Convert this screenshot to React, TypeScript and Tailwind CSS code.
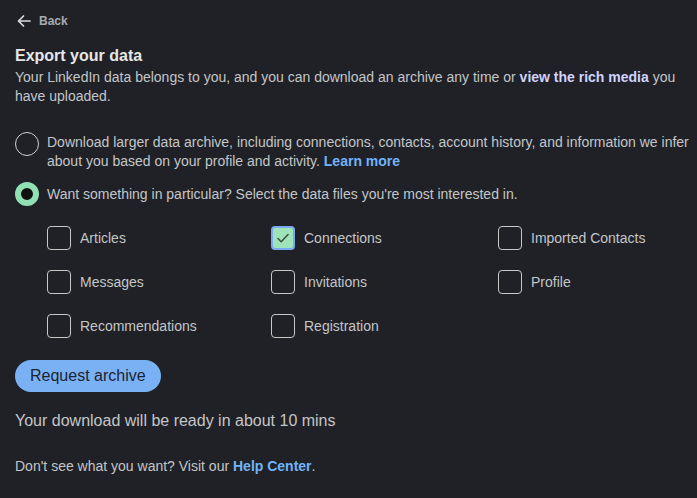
import React, { useState } from 'react';

const FILES = [
  'Articles',
  'Connections',
  'Imported Contacts',
  'Messages',
  'Invitations',
  'Profile',
  'Recommendations',
  'Registration',
];

function Checkbox({ label, checked, onToggle }: { label: string; checked: boolean; onToggle: () => void }) {
  return (
    <button type="button" onClick={onToggle} className="flex items-center h-[44px] text-left">
      <span
        className={`flex items-center justify-center w-[24px] h-[24px] rounded-[4px] ${
          checked ? 'bg-[#9fe3b9] border-2 border-[#7aa9f0]' : 'border border-[#c8c8c8]'
        }`}
      >
        {checked && (
          <svg width="16" height="16" viewBox="0 0 16 16" fill="none">
            <path d="M3 8.5l3.2 3.2L13 4.5" stroke="#3d5245" strokeWidth="1.6" strokeLinecap="round" strokeLinejoin="round" />
          </svg>
        )}
      </span>
      <span className="ml-[9px] text-[14px] text-[#c4c6c9]">{label}</span>
    </button>
  );
}

export default function App() {
  const [mode, setMode] = useState<'full' | 'particular'>('particular');
  const [selected, setSelected] = useState<string[]>(['Connections']);

  const toggle = (f: string) =>
    setSelected((s) => (s.includes(f) ? s.filter((x) => x !== f) : [...s, f]));

  return (
    <div
      className="min-h-[498px] bg-[#1f2126] text-[#c4c6c9] pl-[15px] pr-[5px] pt-[12px]"
      style={{ fontFamily: '"Liberation Sans", Arial, sans-serif' }}
    >
      {/* Back */}
      <div className="flex items-center h-[18px] ml-[1px] text-[#a8abb0]">
        <svg width="16" height="16" viewBox="0 0 16 16" fill="none">
          <path d="M14 8H2.5M7.5 3L2.5 8l5 5" stroke="#d9dadc" strokeWidth="1.7" strokeLinecap="round" strokeLinejoin="round" />
        </svg>
        <span className="ml-[7px] text-[12px] font-bold">Back</span>
      </div>

      {/* Heading */}
      <h1 className="mt-[16px] text-[16px] font-bold leading-[20px] text-[#e6e7e9]">Export your data</h1>
      <p className="mt-[2px] pr-[10px] text-[14px] leading-[19px]">
        Your LinkedIn data belongs to you, and you can download an archive any time or{' '}
        <a className="font-bold text-[#cfd3ff]">view the rich media</a> you have uploaded.
      </p>

      {/* Radio options */}
      <div className="mt-[25px] flex flex-col">
        <label className="flex items-start cursor-pointer" onClick={() => setMode('full')}>
          <span
            className={`mt-[1px] shrink-0 w-[24px] h-[24px] rounded-full ${
              mode === 'full' ? 'border-[6px] border-[#91e0b3] bg-[#111]' : 'border border-[#d0d0d0]'
            }`}
          />
          <span className="ml-[8px] text-[14px] leading-[19px] pt-[2px]">
            Download larger data archive, including connections, contacts, account history, and information we infer
            about you based on your profile and activity.{' '}
            <a className="font-bold text-[#71b4f9]">Learn more</a>
          </span>
        </label>
        <label className="mt-[11px] flex items-center cursor-pointer" onClick={() => setMode('particular')}>
          <span
            className={`shrink-0 w-[24px] h-[24px] rounded-full ${
              mode === 'particular' ? 'border-[6px] border-[#91e0b3] bg-[#111]' : 'border border-[#d0d0d0]'
            }`}
          />
          <span className="ml-[8px] text-[14px] leading-[19px]">
            Want something in particular? Select the data files you're most interested in.
          </span>
        </label>
      </div>

      {/* File checkboxes */}
      <div className="mt-[10px] ml-[32px] grid grid-cols-[224px_227px_1fr]">
        {FILES.map((f) => (
          <Checkbox key={f} label={f} checked={selected.includes(f)} onToggle={() => toggle(f)} />
        ))}
      </div>

      <button
        type="button"
        className="mt-[12px] h-[32px] px-[15px] rounded-full bg-[#7ab1f5] text-[16px] text-[#1c2430]"
      >
        Request archive
      </button>

      <p className="mt-[18px] text-[16px] leading-[22px]">Your download will be ready in about 10 mins</p>

      <p className="mt-[25px] text-[14px] leading-[19px]">
        Don't see what you want? Visit our <a className="font-bold text-[#71b4f9]">Help Center</a>.
      </p>
    </div>
  );
}
